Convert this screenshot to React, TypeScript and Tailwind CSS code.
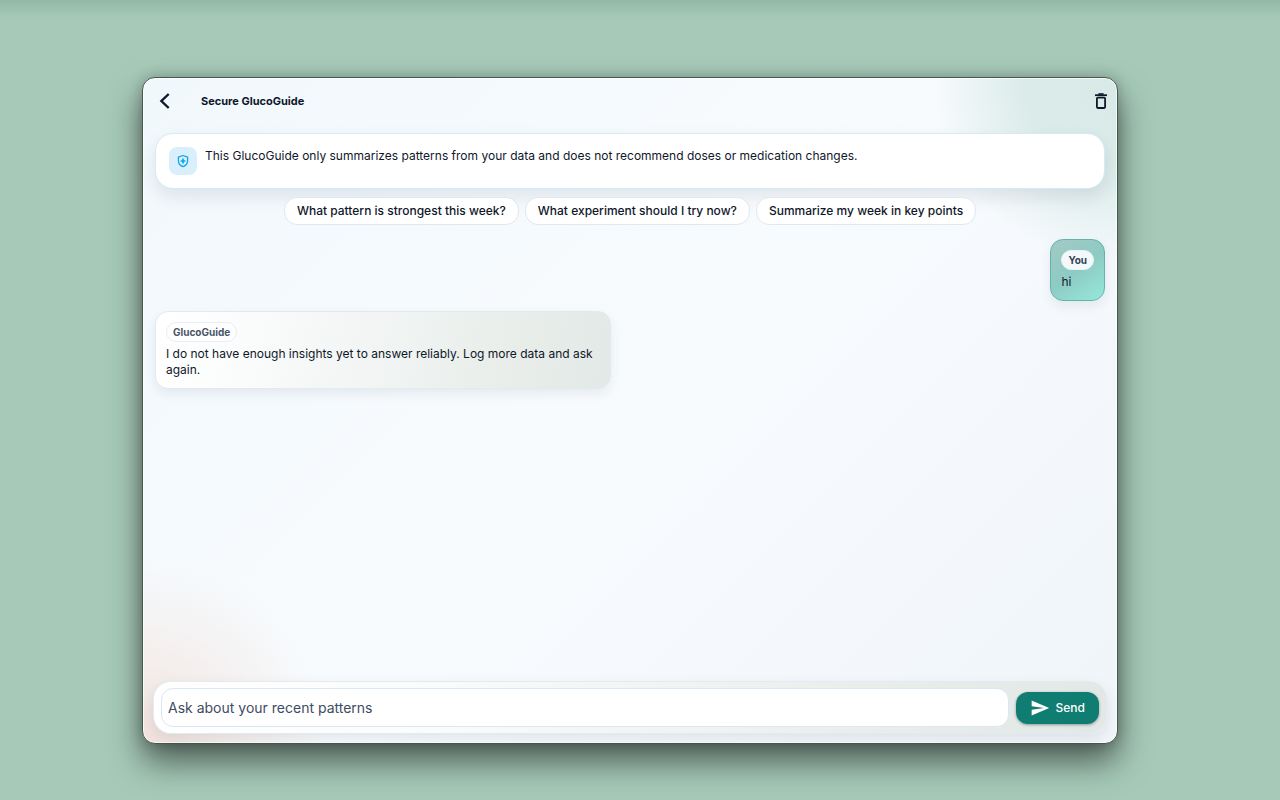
import { useState } from 'react'
import { MdSend } from 'react-icons/md'
import clsx from 'clsx'

type Message = { id: number; role: 'user' | 'assistant'; text: string }

const suggestions = [
  'What pattern is strongest this week?',
  'What experiment should I try now?',
  'Summarize my week in key points',
]

const initialMessages: Message[] = [
  { id: 1, role: 'user', text: 'hi' },
  { id: 2, role: 'assistant', text: 'I do not have enough insights yet to answer reliably. Log more data and ask again.' },
]

function BackIcon() {
  return (
    <svg viewBox="0 0 18 18" className="size-[18px]" fill="none" stroke="currentColor" strokeWidth="2.4" aria-hidden="true">
      <path d="M12.7 2 L5.4 9 L12.7 16" />
    </svg>
  )
}

function TrashIcon() {
  return (
    <svg viewBox="0 0 16 18" className="h-[18px] w-4 shrink-0" fill="none" stroke="currentColor" aria-hidden="true">
      <path d="M2 3.2 H14" strokeWidth="1.8" />
      <path d="M5.4 2 H10.6" strokeWidth="1.6" />
      <rect x="3.9" y="5.6" width="8.2" height="10.4" rx="0.9" strokeWidth="1.8" />
    </svg>
  )
}

function ShieldIcon() {
  return (
    <svg viewBox="0 0 14 14" className="size-[14px]" fill="none" stroke="currentColor" aria-hidden="true">
      <path d="M7 1.5 L11.6 3.2 V6.6 C11.6 9.6 9.7 11.8 7 12.7 C4.3 11.8 2.4 9.6 2.4 6.6 V3.2 Z" strokeWidth="1.3" strokeLinejoin="round" />
      <path d="M7 4.6 V9.4 M4.6 7 H9.4" strokeWidth="1.7" />
    </svg>
  )
}

function MessageBubble({ message }: { message: Message }) {
  const isUser = message.role === 'user'
  return (
    <div
      className={clsx(
        'max-w-[48%] rounded-[13px] border p-[10px] shadow-[0_5px_12px_rgba(15,23,42,0.07)]',
        isUser
          ? 'self-end border-[#5fb5aa] bg-[linear-gradient(145deg,#a4c9c5_0%,#8dcbc3_50%,#97e8dc_100%)]'
          : 'self-start border-[#e0eaf0] bg-[linear-gradient(100deg,#ffffff_0%,#fcfdfd_15%,#e9eeeb_75%,#e3e9e6_100%)]'
      )}
    >
      <span
        className={clsx(
          'block w-fit rounded-full border px-[6px] text-[10px] leading-[18px] font-bold',
          isUser ? 'border-[#e5f3f3] bg-[#f3f9fa] text-[#334155]' : 'border-[#e8eef5] bg-white text-[#475569]'
        )}
      >
        {isUser ? 'You' : 'GlucoGuide'}
      </span>
      <p className="mt-1 text-[12px] leading-4 text-[#0f172a]">{message.text}</p>
    </div>
  )
}

export default function App() {
  const [messages, setMessages] = useState<Message[]>(initialMessages)
  const [draft, setDraft] = useState('')

  function send(text: string) {
    if (!text.trim()) return
    setMessages(m => [...m, { id: m.length + 1, role: 'user', text }])
    setDraft('')
  }

  return (
    <div className="flex min-h-screen bg-[#a6c9b8] bg-[linear-gradient(180deg,rgba(20,60,45,0.12),transparent_18px)] pt-[77px] pr-[162px] pb-14 pl-[142px] font-[Inter,sans-serif]">
      <main className="flex min-w-0 flex-1 flex-col rounded-[13px] border border-[#46594f] bg-[#f4f9fc] bg-[radial-gradient(circle_at_0%_100%,rgba(240,222,216,0.9)_0px,rgba(243,234,230,0.75)_80px,transparent_185px),radial-gradient(circle_at_100%_0%,rgba(213,232,230,0.9)_0px,rgba(213,232,230,0.85)_90px,transparent_185px),linear-gradient(135deg,#f1f8fc_0%,#f8fbfe_50%,#f0f5fa_100%)] shadow-[inset_0_0_0_1px_rgba(255,255,255,0.7),0_18px_32px_rgba(0,0,0,0.52),0_0_14px_rgba(0,0,0,0.22)]">
        {/* Header */}
        <header className="flex h-[46px] items-center px-2">
          <button type="button" aria-label="Back" className="flex size-7 items-center justify-center text-[#0f172a]">
            <BackIcon />
          </button>
          <h1 className="ml-[22px] flex-1 text-[11px] leading-4 font-bold text-[#0f172a]">Secure GlucoGuide</h1>
          <button
            type="button"
            aria-label="Clear conversation"
            className="flex size-4 items-center justify-center text-[#0f172a]"
            onClick={() => setMessages([])}
          >
            <TrashIcon />
          </button>
        </header>

        {/* Safety notice */}
        <section className="mx-3 mt-[9px] flex min-h-[55px] gap-2 rounded-[18px] border border-[#d3ebf7] bg-white p-[13px] shadow-[0_8px_18px_rgba(15,23,42,0.09)]">
          <span className="flex size-7 shrink-0 items-center justify-center rounded-lg bg-[#d9f0fc] text-[#0ea5e9]">
            <ShieldIcon />
          </span>
          <p className="text-[12px] leading-[18px] text-[#0f172a]">
            This GlucoGuide only summarizes patterns from your data and does not recommend doses or medication changes.
          </p>
        </section>

        <div className="mt-2 flex flex-wrap justify-center gap-[6px] px-3">
          {suggestions.map(s => (
            <button
              key={s}
              type="button"
              className="rounded-[13px] border border-[#dde9f1] bg-white px-3 text-[12px] leading-[26px] font-medium text-[#0f172a]"
              onClick={() => send(s)}
            >
              {s}
            </button>
          ))}
        </div>

        {/* Messages */}
        <div className="flex flex-1 flex-col gap-[10px] px-3 pt-[14px]">
          {messages.map(m => (
            <MessageBubble key={m.id} message={m} />
          ))}
        </div>

        {/* Composer */}
        <form
          className="mx-[10px] mb-[9px] flex items-center gap-[7px] rounded-[18px] border border-[#e3ebf1] bg-[linear-gradient(90deg,#ffffff_0%,#fafbfb_30%,#e9eeeb_75%,#e2e8e5_100%)] px-[7px] py-[6px] shadow-[0_5px_14px_rgba(15,23,42,0.09)]"
          onSubmit={e => {
            e.preventDefault()
            send(draft)
          }}
        >
          <input
            aria-label="Ask about your recent patterns"
            placeholder="Ask about your recent patterns"
            className="h-[39px] min-w-0 flex-1 rounded-[12px] border border-[#dbe7f3] bg-white px-[6px] text-[14px] text-[#0f172a] outline-none placeholder:text-[#3d4c63]"
            value={draft}
            onChange={e => setDraft(e.target.value)}
          />
          <button
            type="submit"
            className="flex h-8 items-center gap-[6px] rounded-[12px] bg-[#0f7d72] px-[14px] text-[12px] font-medium text-white shadow-[0_1px_3px_rgba(15,23,42,0.4)]"
          >
            <MdSend className="size-5" />
            Send
          </button>
        </form>
      </main>
    </div>
  )
}
